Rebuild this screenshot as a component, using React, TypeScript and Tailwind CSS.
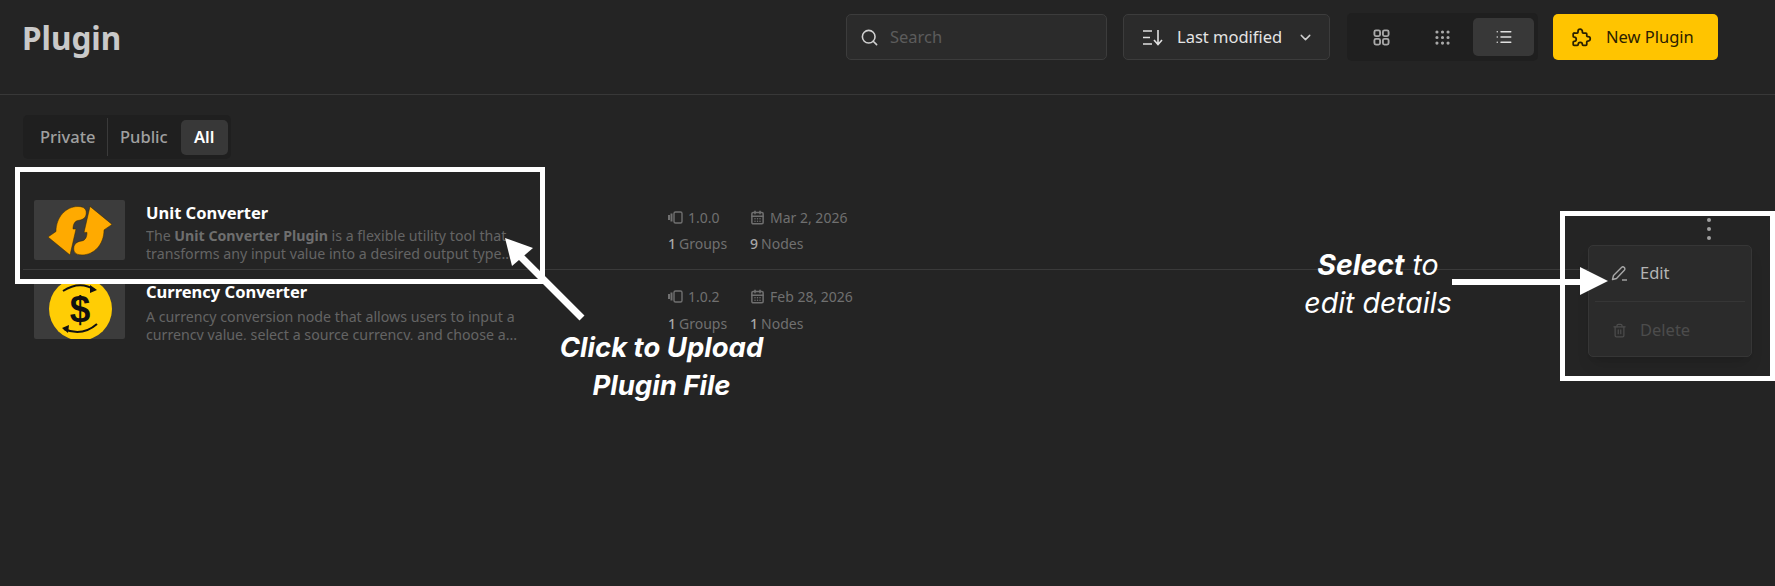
import { CalendarDays, ChevronDown, Grip, List, Search, Trash2 } from "lucide-react";

const plugins = [
	{
		name: "Unit Converter",
		version: "1.0.0",
		date: "Mar 2, 2026",
		groups: 1,
		nodes: 9,
		rowClass: "h-[94px] pt-[24px] border-b border-[#3a3a3a]",
		textClass: "pt-[3px]",
		descClass: "mt-[4px] h-[36px]",
		metaClass: "pt-[8px] gap-y-[7px]",
	},
	{
		name: "Currency Converter",
		version: "1.0.2",
		date: "Feb 28, 2026",
		groups: 1,
		nodes: 1,
		rowClass: "h-[80px] pt-[9px]",
		textClass: "pt-[3px]",
		descClass: "mt-[6px] h-[32px]",
		metaClass: "pt-[8px] gap-y-[8px]",
	},
];

function VersionIcon() {
	return (
		<svg width="15" height="15" viewBox="0 0 15 15" fill="none" stroke="currentColor" strokeWidth="1.4">
			<rect x="6" y="2" width="8" height="11" rx="1.5" />
			<path d="M3.5 3.5v8M1 5v5" strokeWidth="2" />
		</svg>
	);
}

function SortIcon() {
	return (
		<svg width="21" height="17" viewBox="0 0 21 17" fill="none" stroke="#e0e0e0" strokeWidth="1.6">
			<path d="M1 2h9M1 8.5h7M1 15h9" />
			<path d="M16 1v14M12 11l4 4.5 4-4.5" />
		</svg>
	);
}

function GridIcon() {
	return (
		<svg width="17" height="17" viewBox="0 0 18 18" fill="none" stroke="#a8a8a8" strokeWidth="2">
			<rect x="1.5" y="1.5" width="6" height="6" rx="1.6" />
			<rect x="10.5" y="1.5" width="6" height="6" rx="1.6" />
			<rect x="1.5" y="10.5" width="6" height="6" rx="1.6" />
			<rect x="10.5" y="10.5" width="6" height="6" rx="1.6" />
		</svg>
	);
}

function PuzzleIcon() {
	return (
		<svg width="21" height="21" viewBox="0 0 24 24" fill="none" stroke="#2a2000" strokeWidth="2" strokeLinejoin="round">
			<path d="M4 7h3a1 1 0 0 0 1-1V5a2.5 2.5 0 0 1 5 0v1a1 1 0 0 0 1 1h3a1 1 0 0 1 1 1v2a1 1 0 0 0 1 1h.5a2.5 2.5 0 0 1 0 5H19a1 1 0 0 0-1 1v3a1 1 0 0 1-1 1h-3a1 1 0 0 1-1-1 2.4 2.4 0 0 0-4.800 0 1 1 0 0 1-1 1H3.500a1 1 0 0 1-1-1v-2.500a1 1 0 0 1 1-1 2.500 2.500 0 0 0 0-5 1 1 0 0 1-1-1V8a1 1 0 0 1 1.500-1z" />
		</svg>
	);
}

function PencilIcon() {
	return (
		<svg width="17" height="17" viewBox="0 0 17 17" fill="none" stroke="#a8a8a8" strokeWidth="1.4" strokeLinejoin="round">
			<path d="M2.500 10.500 10.500 2.500a1.900 1.900 0 0 1 2.800 2.800L5.500 13.500 1.500 14.500z" />
			<path d="M11 15h5" />
		</svg>
	);
}

function UnitLogo() {
	const arrow = "M13 37 L21 31.5 C21 17 31 6.5 43 6.5 C50 6.5 52 10 51 15 C50 19 46 20 43 20.5 C40 21 38 24 38 29 L41 29 L35 55 Z";
	return (
		<svg width="91" height="61" viewBox="0 0 91 61">
			<g transform="translate(1 0)">
				<path d={arrow} fill="#ffaa00" stroke="#3a2a00" strokeWidth="0.5" />
				<path d={arrow} fill="#ffaa00" stroke="#3a2a00" strokeWidth="0.5" transform="rotate(180 45 30.7)" />
			</g>
		</svg>
	);
}

function CoinLogo() {
	return (
		<svg width="91" height="60" viewBox="0 0 91 60">
			<circle cx="46.500" cy="30" r="31.500" fill="#ffcd05" />
			<path d="M29 12 Q46 1 61 11" fill="none" stroke="#111" strokeWidth="2" />
			<path d="M56 6l7 5-7 3z" fill="#111" />
			<path d="M63 45 Q48 58 30 50" fill="none" stroke="#111" strokeWidth="2" />
			<path d="M35 46l-7 3 6 5z" fill="#111" />
			<text x="46" y="43" textAnchor="middle" fontFamily="Liberation Sans, sans-serif" fontWeight="700" fontSize="37" fill="#111">
				$
			</text>
		</svg>
	);
}

export default function App() {
	return (
		<div className="relative h-[586px] w-[1775px] overflow-hidden bg-[#242424] font-['Noto_Sans',sans-serif] text-[#a0a0a0]">
			<header className="flex h-[95px] items-start border-b border-[#383838] pl-[22px] pr-[57px] pt-[13px]">
				<h1 className="text-[31.5px] font-bold leading-[50px] text-[#c9c9c9]">Plugin</h1>
				<div className="ml-auto flex items-center">
					<div className="flex h-[46px] w-[261px] items-center rounded-[5px] border border-[#3c3c3c] bg-[#2b2b2b] pl-[13px]">
						<Search size={19} className="text-[#d0d0d0]" />
						<span className="ml-[11px] text-[16.5px] text-[#5c5c5c]">Search</span>
					</div>
					<div className="ml-[16px] flex h-[46px] w-[207px] items-center rounded-[5px] border border-[#3c3c3c] bg-[#2b2b2b] pl-[18px]">
						<SortIcon />
						<span className="ml-[14px] text-[16.5px] text-[#e4e4e4]">Last modified</span>
						<ChevronDown size={17} className="ml-[15px] text-[#d0d0d0]" />
					</div>
					<div className="ml-[17px] flex h-[48px] w-[191px] items-center rounded-[5px] bg-[#1f1f1f] pl-[26px]">
						<GridIcon />
						<Grip size={19} className="ml-[43px] text-[#a8a8a8]" />
						<div className="ml-[21px] flex h-[38px] w-[61px] items-center justify-center rounded-[5px] bg-[#383838]">
							<List size={18} className="text-[#e0e0e0]" />
						</div>
					</div>
					<button className="ml-[15px] flex h-[46px] w-[165px] items-center rounded-[5px] bg-[#ffc400] pl-[18px] text-[16.5px] text-[#2a2000]">
						<PuzzleIcon />
						<span className="ml-[14px]">New Plugin</span>
					</button>
				</div>
			</header>

			<div className="ml-[23px] mt-[20px] flex h-[44px] w-[208px] items-center rounded-[5px] bg-[#1f1f1f] pl-[17px] text-[16.5px] font-medium">
				<span className="w-[68px] border-r border-[#3a3a3a] leading-[38px]">Private</span>
				<span className="ml-[12px]">Public</span>
				<span className="ml-[13px] flex h-[35px] w-[47px] items-center justify-center rounded-[5px] bg-[#383838] font-semibold text-white">
					All
				</span>
			</div>

			<div className="mx-[23px] mt-[17px]">
				{plugins.map((plugin, i) => (
					<div key={plugin.name} className={`flex pl-[11px] ${plugin.rowClass}`}>
						<div className="h-[60px] w-[91px] flex-none overflow-hidden rounded-[2px] bg-[#3c3c3c]">
							{i === 0 ? <UnitLogo /> : <CoinLogo />}
						</div>
						<div className={`ml-[21px] w-[522px] flex-none ${plugin.textClass}`}>
							<div className="text-[16.5px] font-bold leading-[20px] text-white">{plugin.name}</div>
							<div className={`w-[400px] overflow-hidden text-[14.2px] leading-[17.5px] text-[#646464] ${plugin.descClass}`}>
								{i === 0 ? (
									<>
										The <b className="font-bold text-[#6e6e6e]">Unit Converter Plugin</b> is a flexible utility tool that transforms any input value into a desired output type...
									</>
								) : (
									"A currency conversion node that allows users to input a currency value, select a source currency, and choose a..."
								)}
							</div>
						</div>
						<div className={`grid h-fit grid-cols-[82px_auto] text-[14px] leading-[19px] text-[#707070] ${plugin.metaClass}`}>
							<div className="flex items-center gap-[5px]">
								<VersionIcon />
								{plugin.version}
							</div>
							<div className="flex items-center gap-[5px]">
								<CalendarDays size={15} strokeWidth={2.4} />
								{plugin.date}
							</div>
							<div className="flex gap-[3px]">
								<span className="font-medium text-[#a8a8a8]">{plugin.groups}</span>
								Groups
							</div>
							<div className="flex gap-[3px]">
								<span className="font-medium text-[#a8a8a8]">{plugin.nodes}</span>
								Nodes
							</div>
						</div>
					</div>
				))}
			</div>

			{/* row menu, open */}
			<div className="absolute left-[1707px] top-[218px] flex flex-col gap-[5px]">
				<span className="h-[4px] w-[4px] rounded-full bg-[#a0a0a0]" />
				<span className="h-[4px] w-[4px] rounded-full bg-[#a0a0a0]" />
				<span className="h-[4px] w-[4px] rounded-full bg-[#a0a0a0]" />
			</div>
			<div className="absolute left-[1588px] top-[245px] h-[112px] w-[164px] rounded-[5px] border border-[#363636] bg-[#2b2b2b] px-[6px] text-[16.5px] shadow-lg">
				<div className="flex h-[56px] items-center border-b border-[#363636] pl-[16px] text-[#b4b4b4]">
					<PencilIcon />
					<span className="ml-[12px]">Edit</span>
				</div>
				<div className="flex h-[56px] items-center pl-[17px] text-[#4c4c4c]">
					<Trash2 size={15} />
					<span className="ml-[13px]">Delete</span>
				</div>
			</div>

			{/* annotations pasted over the screenshot */}
			<div className="absolute left-[15px] top-[167px] h-[117px] w-[530px] border-[5px] border-white" />
			<div className="absolute left-[1560px] top-[211px] h-[170px] w-[215px] border-[5px] border-white" />
			<svg className="absolute left-0 top-0" width="1775" height="586" fill="none">
				<path d="M582 318 L520 256" stroke="white" strokeWidth="7" />
				<path d="M505 238 L533 248 L512 266 Z" fill="white" />
				<path d="M1452 282 H1582" stroke="white" strokeWidth="6" />
				<path d="M1580 267 L1608 281 L1580 295 Z" fill="white" />
			</svg>
			<div className="absolute left-[540px] top-[328px] w-[243px] text-center font-['Inter',sans-serif] text-[27.5px] font-bold italic leading-[38px] text-white">
				Click to Upload
				<br />
				Plugin File
			</div>
			<div className="absolute left-[1288px] top-[246px] w-[180px] text-center font-['Inter',sans-serif] text-[28.5px] italic leading-[38px] text-white">
				<b className="font-bold">Select</b> to
				<br />
				edit details
			</div>
		</div>
	);
}
